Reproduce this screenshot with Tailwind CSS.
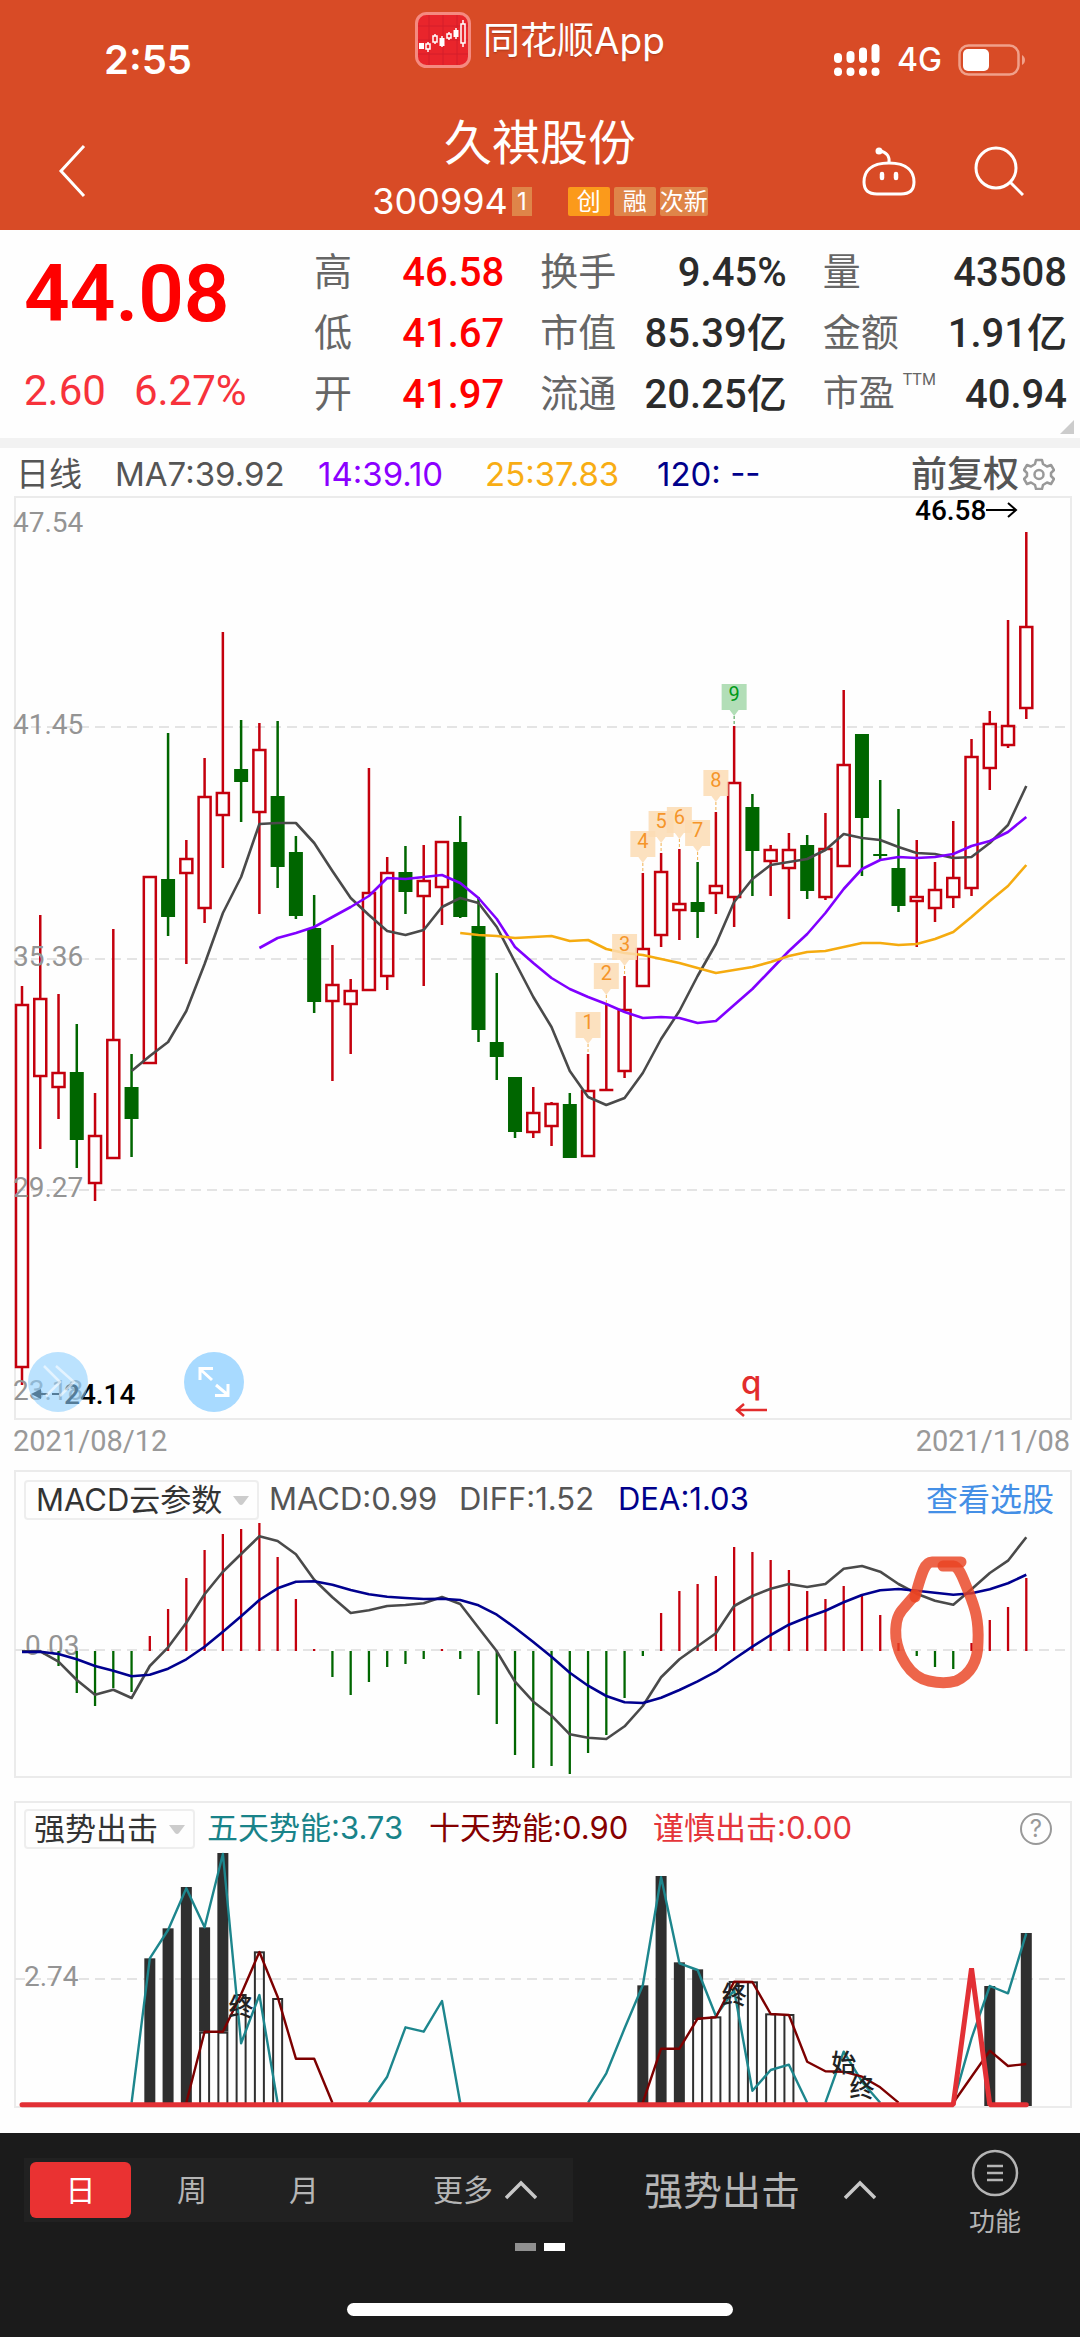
<!DOCTYPE html>
<html lang="zh-CN">
<head>
  <meta charset="UTF-8">
  <meta name="viewport" content="width=device-width, initial-scale=1.0">
  <title>久祺股份 300994</title>
  <script src="https://cdn.jsdelivr.net/npm/@tailwindcss/browser@4"></script>
</head>
<body class="flex min-h-screen flex-col bg-[#fefefe] font-['Inter','Noto_Sans_CJK_SC',sans-serif] text-[#333]">

  <!-- Encabezado -->
  <header class="bg-[#d84b26] text-white">
    <div class="grid h-[104px] grid-cols-3 items-center">
      <span class="pt-4 pl-[104px] text-[40px] leading-none font-semibold">2:55</span>
      <div class="flex items-center justify-center gap-3 self-start pt-3">
        <svg class="h-14 w-14" viewBox="0 0 56 56" fill="none">
          <rect x="1.5" y="1.5" width="53" height="53" rx="10" fill="#e9252c" stroke="#f58a80" stroke-width="3"/>
          <path d="M14 3v50M28 3v50M42 3v50M3 14h50M3 28h50M3 42h50" stroke="#d41f2a" stroke-width="1"/>
          <path d="M13 30v10M20 22v10M27 24v11M34 20v8M41 16v11M48 8v27" stroke="#fff" stroke-width="1.5"/>
          <path d="M4 31h5v6h-5zM24.500 26h5v8h-5zM38.500 18h5v7h-5z" fill="#fff"/>
          <path d="M11 32h4v5h-4zM18 24h4v6h-4zM32 22h4v4h-4zM46 12h4v19h-4z" fill="#e9252c" stroke="#fff" stroke-width="1.5"/>
        </svg>
        <span class="text-[37px] leading-none whitespace-nowrap text-shadow-sm">同花顺App</span>
      </div>
      <div class="flex items-center justify-end gap-4 pt-4 pr-[54px]">
        <svg class="h-8 w-12" viewBox="0 0 48 32" stroke="#fff" stroke-width="8" stroke-linecap="round">
          <path d="M5 13v2M17.500 11v4M30 7.500v7.500M42.500 4v11M5 27.500v.5M17.500 27.500v.5M30 27.500v.5M42.500 27.500v.5"/>
        </svg>
        <span class="text-[32px] leading-none font-medium">4G</span>
        <svg class="h-8 w-[68px]" viewBox="0 0 68 32" fill="none">
          <rect x="1.500" y="1.500" width="59" height="29" rx="9" stroke="#f0a08a" stroke-width="2.500"/>
          <rect x="5" y="5" width="26" height="22" rx="5" fill="#fff"/>
          <path d="M64 11c4 2 4 8 0 10z" fill="#f0a08a"/>
        </svg>
      </div>
    </div>
    <div class="grid h-[126px] grid-cols-[1fr_auto_1fr] items-center">
      <button aria-label="返回" class="ml-[58px] justify-self-start pt-2">
        <svg class="h-[54px] w-7" viewBox="0 0 28 54" fill="none" stroke="#fff" stroke-width="3"><path d="M26 2L3 27L26 52"/></svg>
      </button>
      <div class="flex flex-col items-center gap-4 pt-1 pb-2">
        <h1 class="text-[48px] leading-[56px]">久祺股份</h1>
        <div class="flex items-center gap-1 text-2xl leading-[29px]">
          <span class="text-[36px]">300994</span>
          <span class="mr-8 w-5 bg-[#df8549] text-center">1</span>
          <span class="w-[42px] rounded-xs bg-[#fb9a1b] text-center">创</span>
          <span class="w-[42px] rounded-xs bg-[#df8549] text-center">融</span>
          <span class="rounded-xs bg-[#df8549]">次新</span>
        </div>
      </div>
      <div class="flex items-center gap-[58px] justify-self-end pt-2 pr-14">
        <button aria-label="智能助手">
          <svg class="h-[50px] w-[54px]" viewBox="0 0 54 50" fill="none" stroke="#fff" stroke-width="3">
            <path d="M27 17C46 17 52 26 52 36C52 45 47 48 39 48H15C7 48 2 45 2 36C2 26 8 17 27 17z"/>
            <path d="M27 17C28 10 24 6 18 5"/>
            <circle cx="17" cy="5" r="3.500" fill="#fff" stroke="none"/>
            <path d="M20 28v4M34 28v4" stroke-width="4.500" stroke-linecap="round"/>
          </svg>
        </button>
        <button aria-label="搜索">
          <svg class="h-[50px] w-[50px]" viewBox="0 0 50 50" fill="none" stroke="#fff" stroke-width="3">
            <circle cx="22" cy="22" r="20"/><path d="M36 36L49 49"/>
          </svg>
        </button>
      </div>
    </div>
  </header>

  <!-- Cotización -->
  <section class="relative flex h-[208px] items-start pr-[13px] pl-6 font-['Roboto','Noto_Sans_CJK_SC',sans-serif]">
    <div class="w-[290px] pt-3">
      <div class="text-[80px] leading-[104px] font-semibold text-[#fe0000]">44.08</div>
      <div class="flex gap-[28px] pt-6 text-[42px] leading-[42px] text-[#f7323b]"><span>2.60</span><span>6.27%</span></div>
    </div>
    <dl class="grid flex-1 grid-cols-[190fr_246fr_244fr] gap-x-9 pt-3 text-[38px] leading-[61px] text-[#666] [&_dd]:text-[40px] [&_dd]:font-medium [&>div]:flex [&>div]:justify-between">
      <div><dt>高</dt><dd class="text-[#fe0000]">46.58</dd></div>
      <div><dt>换手</dt><dd class="text-[#2b2b2b]">9.45%</dd></div>
      <div><dt>量</dt><dd class="text-[#2b2b2b]">43508</dd></div>
      <div><dt>低</dt><dd class="text-[#fe0000]">41.67</dd></div>
      <div><dt>市值</dt><dd class="text-[#2b2b2b]">85.39亿</dd></div>
      <div><dt>金额</dt><dd class="text-[#2b2b2b]">1.91亿</dd></div>
      <div><dt>开</dt><dd class="text-[#fe0000]">41.97</dd></div>
      <div><dt>流通</dt><dd class="text-[#2b2b2b]">20.25亿</dd></div>
      <div><dt class="flex gap-2 text-[36px]">市盈<span class="pt-2 text-base leading-none">TTM</span></dt><dd class="text-[#2b2b2b]">40.94</dd></div>
    </dl>
    <svg class="absolute right-1.5 bottom-1 h-3.5 w-3.5" viewBox="0 0 14 14"><path d="M14 0V14H0z" fill="#ccc"/></svg>
  </section>
  <div class="h-2.5 bg-[#f2f2f2]"></div>

  <!-- Medias móviles -->
  <section class="flex h-12 items-center pt-1 pr-[25px] pl-4 text-[33px] leading-none text-[#555]">
    <span class="w-[99px]">日线</span>
    <span class="w-[203px]">MA7:39.92</span>
    <span class="w-[167px] text-[#8b00ff]">14:39.10</span>
    <span class="w-[172px] text-[#f8ad14]">25:37.83</span>
    <span class="text-[#00008b]">120: --</span>
    <button class="ml-auto flex items-center gap-1 text-[36px] font-medium">前复权
      <svg class="h-8 w-8" viewBox="0 0 32 32" fill="none" stroke="#999" stroke-width="2.500" stroke-linejoin="round">
        <path d="M13 2h6l1 4l4 2.500l4-1.500l3 5l-3 3v3l3 3l-3 5l-4-1.500l-4 2.500l-1 4h-6l-1-4l-4-2.500l-4 1.500l-3-5l3-3v-3l-3-3l3-5l4 1.500l4-2.500z"/>
        <circle cx="16" cy="16.500" r="4.500"/>
      </svg>
    </button>
  </section>

  <!-- Velas -->
  <section class="grid">
    <svg id="kline" class="col-start-1 row-start-1 w-full overflow-visible font-['Roboto',sans-serif]" viewBox="0 0 1080 924" fill="none"></svg>
    <div class="z-10 col-start-1 row-start-1 flex gap-24 self-end pb-2 pl-7">
      <button aria-label="快进" class="rounded-full bg-[#8ecffd]/60">
        <svg class="h-[60px] w-[60px]" viewBox="0 0 60 60" fill="none" stroke="#fff" stroke-opacity=".6" stroke-width="2.500"><path d="M16 14L32 30L18 44M28 14L46 30L32 44"/></svg>
      </button>
      <button aria-label="放大" class="rounded-full bg-[#a8daff]">
        <svg class="h-[60px] w-[60px]" viewBox="0 0 60 60" fill="none" stroke="#fff" stroke-width="3"><path d="M28 28L16 17M16 28V16.500H29M32 33L44 43M44 32V43.500H31"/></svg>
      </button>
    </div>
  </section>
  <div class="flex h-[50px] items-center justify-between pr-[10px] pb-1.5 pl-[13px] font-['Roboto',sans-serif] text-[29px] text-[#999]">
    <time>2021/08/12</time><time>2021/11/08</time>
  </div>

  <!-- MACD -->
  <section class="grid text-[30px] leading-none">
    <svg id="macd" class="col-start-1 row-start-1 w-full font-['Roboto',sans-serif]" viewBox="0 0 1080 308" fill="none"></svg>
    <div class="z-10 col-start-1 row-start-1 mt-2.5 flex h-10 items-center self-start pr-[26px] pl-6">
      <label class="relative mr-2.5">
        <select aria-label="指标" class="h-10 w-[235px] appearance-none rounded-sm border-2 border-[#eee] bg-[#fefefe] pl-2.5 text-[31px] leading-9 text-[#333]"><option>MACD云参数</option></select>
        <svg class="pointer-events-none absolute top-4 right-2.5 h-2.5 w-4" viewBox="0 0 16 10"><path d="M0 0H16L10 8Q8 10 6 8z" fill="#ccc"/></svg>
      </label>
      <span class="w-[190px] pb-1 text-[31px] text-[#555]">MACD:0.99</span>
      <span class="w-[159px] pb-1 text-[31px] text-[#555]">DIFF:1.52</span>
      <span class="pb-1 text-[31px] text-[#00008b]">DEA:1.03</span>
      <a href="#" class="ml-auto text-[32px] text-[#448fe6]">查看选股</a>
    </div>
  </section>

  <!-- 强势出击 -->
  <section class="mt-[23px] grid text-[31px] leading-none">
    <svg id="power" class="col-start-1 row-start-1 w-full font-['Roboto','Noto_Sans_CJK_SC',sans-serif]" viewBox="0 0 1080 308" fill="none"></svg>
    <div class="z-10 col-start-1 row-start-1 mt-2 flex h-10 items-center self-start pr-[28px] pl-6">
      <label class="relative mr-3">
        <select aria-label="副图指标" class="h-10 w-[171px] appearance-none rounded-sm border-2 border-[#eee] bg-[#fefefe] pl-2 leading-9 text-[#333]"><option>强势出击</option></select>
        <svg class="pointer-events-none absolute top-4 right-2.5 h-2.5 w-4" viewBox="0 0 16 10"><path d="M0 0H16L10 8Q8 10 6 8z" fill="#ccc"/></svg>
      </label>
      <span class="w-[222px] pb-1 text-[#198389]">五天势能:3.73</span>
      <span class="w-[224px] pb-1 text-[#850000]">十天势能:0.90</span>
      <span class="pb-1 text-[#e5353a]">谨慎出击:0.00</span>
      <button aria-label="帮助" class="ml-auto h-8 w-8 rounded-full border-2 border-[#999] text-2xl leading-none text-[#999]">?</button>
    </div>
  </section>

  <!-- Barra inferior -->
  <nav class="mt-6 flex flex-1 flex-col bg-[#1b1b1b] text-[#b5b5b5]">
    <div class="flex items-start pl-6">
      <div class="mt-[25px] flex h-16 w-[549px] items-center bg-[#212121] pl-1.5 text-[30px] leading-none">
        <button class="h-14 w-[101px] rounded-md bg-[#ea3232] text-white">日</button>
        <button class="h-14 w-[122px]">周</button>
        <button class="h-14 w-[102px]">月</button>
        <button class="ml-auto flex h-14 items-center gap-3 pr-9">更多
          <svg class="h-5 w-8" viewBox="0 0 32 20" fill="none" stroke="#c8c8c8" stroke-width="3.500"><path d="M1 18L16 3L31 18"/></svg>
        </button>
      </div>
      <button class="mt-[25px] ml-[71px] flex h-16 items-center gap-11 text-[39px] leading-none">强势出击
        <svg class="h-5 w-8" viewBox="0 0 32 20" fill="none" stroke="#c8c8c8" stroke-width="3.500"><path d="M1 18L16 3L31 18"/></svg>
      </button>
      <button class="mr-[59px] ml-auto flex flex-col items-center gap-2.5 pt-4 text-[26px] leading-[30px]">
        <svg class="h-12 w-12" viewBox="0 0 48 48" fill="none" stroke="#b5b5b5" stroke-width="2.500"><circle cx="24" cy="24" r="22"/><path d="M16 17h16M16 24h16M16 31h16"/></svg>
        功能
      </button>
    </div>
    <div class="flex justify-center gap-2 pt-1.5">
      <i class="h-2 w-[21px] bg-[#909090]"></i><i class="h-2 w-[21px] bg-white"></i>
    </div>
    <div class="mx-auto mt-auto mb-[21px] h-[13px] w-[386px] rounded-full bg-white"></div>
  </nav>

  <script>
    const RED = '#c4000d', GREEN = '#006600', DARK = '#2f2f2f';
    const x = i => 22 + i * 18.26;
    const line = (pts, start, fy, color, w = 2.6) =>
      `<polyline points="${pts.map((v, i) => x(i + start).toFixed(1) + ',' + fy(v).toFixed(1)).join(' ')}" stroke="${color}" stroke-width="${w}" stroke-linejoin="round"/>`;
    const dash = y => `<path d="M15 ${y}H1071" stroke="#e4e4e4" stroke-width="2" stroke-dasharray="10 6"/>`;
    const label = (y, t, lx = 13) => `<text x="${lx}" y="${y}" font-size="28" fill="#949494">${t}</text>`;
    const frame = (top, bottom) => `<path d="M15 ${top}H1071V${bottom}H15z" stroke="#ebebeb" stroke-width="2"/>`;

    // Cada vela: [alcista, máximo, techo, suelo, mínimo]
    const candles = [
      [1,986,1005,1367,1385],[1,915,999,1076,1149],[1,994,1073,1087,1119],[0,1024,1072,1140,1168],[1,1093,1136,1183,1201],
      [1,929,1040,1158,1158],[0,1054,1087,1119,1157],[1,877,877,1063,1063],[0,733,879,917,936],[1,840,859,873,964],
      [1,758,797,908,923],[1,632,793,815,868],[0,720,769,782,822],[1,723,750,812,914],[0,721,796,867,888],
      [0,836,852,916,919],[0,895,928,1002,1013],[1,945,985,1001,1081],[1,979,991,1004,1054],[1,768,893,990,990],
      [1,857,873,976,990],[0,846,872,892,914],[1,845,881,896,986],[1,842,842,887,925],[0,816,842,917,918],
      [0,897,926,1030,1042],[0,973,1042,1057,1080],[0,1077,1077,1132,1138],[1,1087,1113,1132,1138],[1,1102,1104,1126,1146],
      [0,1093,1104,1158,1158],[1,1054,1091,1156,1156],[1,1005,1090,1090,1090],[1,976,1010,1071,1078],[1,873,949,986,986],
      [1,853,872,935,947],[1,849,904,910,940],[0,862,902,912,938],[1,812,886,893,914],[1,726,783,897,927],
      [0,794,807,851,896],[1,845,850,861,896],[1,833,850,868,919],[0,835,845,891,899],[1,813,849,897,900],
      [1,690,765,866,866],[0,734,734,818,876],[0,780,854,856,860],[0,809,868,906,912],[1,840,897,901,947],
      [1,862,890,908,922],[1,821,878,897,908],[1,739,757,888,896],[1,711,724,768,790],[1,620,726,745,748],
      [1,532,627,708,719]
    ];
    const ma7 = [1071,1056,1042,1011,964,913,877,824,823,823,843,871,898,915,931,935,930,907,898,903,927,962,997,1027,1071,1097,1105,1098,1073,1039,1011,976,944,902,879,865,862,859,850,834,838,840,847,853,854,858,857,843,825,786];
    const ma14 = [948,938,933,927,917,907,896,878,879,877,875,883,898,919,947,963,978,989,997,1004,1012,1018,1017,1018,1023,1021,1005,989,970,951,934,913,889,869,860,857,858,857,854,846,841,832,817];
    const ma25 = [933,935,936,938,937,936,941,940,949,953,955,959,963,968,973,970,967,962,956,952,951,947,943,943,945,944,939,932,917,901,886,865];

    const ky = v => v - 496;
    let k = frame(1, 923) + dash(231) + dash(463) + dash(694);
    candles.forEach(([up, hi, top, bot, lo], i) => {
      const c = up ? RED : GREEN, cx = x(i);
      k += `<path d="M${cx} ${ky(hi)}V${ky(top)}M${cx} ${ky(bot)}V${ky(lo)}" stroke="${c}" stroke-width="2.5"/>`;
      k += up
        ? `<rect x="${cx - 6}" y="${ky(top)}" width="12" height="${bot - top}" stroke="${c}" stroke-width="2.5"/>`
        : `<rect x="${cx - 7}" y="${ky(top)}" width="14" height="${bot - top}" fill="${c}"/>`;
    });
    // Vela sin cuerpo
    k += `<path d="M${x(32) - 7} ${ky(1090)}h14" stroke="${RED}" stroke-width="2.5"/>`;
    k += line(ma7, 6, ky, '#4a4a4a') + line(ma14, 13, ky, '#8000ff') + line(ma25, 24, ky, '#f5ab10');
    // Marcadores numerados 1-9
    for (let n = 1; n <= 9; n++) {
      const i = n + 30, cx = x(i), t = ky(candles[i][1]) - 42, green = n === 9;
      k += `<g><path d="M${cx - 12.5} ${t}h25v26h-8l-4.500 6l-4.500-6h-8z" fill="${green ? '#a5d8aa' : '#fcdcb4'}" fill-opacity=".85"/>
        <path d="M${cx} ${t + 32}v10" stroke="${green ? '#3d9a45' : '#f0b050'}" stroke-dasharray="3 2"/>
        <text x="${cx}" y="${t + 17}" text-anchor="middle" font-size="20" fill="${green ? '#009a18' : '#f5952a'}">${n}</text></g>`;
    }
    k += label(36, '47.54') + label(238, '41.45') + label(470, '35.36') + label(701, '29.27') + label(904, '23.18');
    k += `<text x="915" y="24" font-size="28" font-weight="500" fill="#000">46.58</text><path d="M986 14h30M1008 7l8 7l-8 7" stroke="#000" stroke-width="2"/>
      <text x="64" y="908" font-size="28" font-weight="500" fill="#000">24.14</text><path d="M40 898h8M52 898h7" stroke="#000" stroke-width="2"/><path d="M31 898l10-5v10z" fill="#000"/>
      <text x="741" y="898" font-size="33" font-weight="500" class="font-['Inter',sans-serif]" fill="#e22c2c">q</text><path d="M767 914H737M744 908l-7 6l7 6" stroke="#e22c2c" stroke-width="2.5"/>`;
    document.getElementById('kline').innerHTML = k;

    // MACD
    const hist = [0,0,-15,-42,-55,-37,-41,15,42,73,101,117,122,128,94,52,2,-26,-44,-31,-16,-13,-8,2,-8,-44,-73,-104,-117,-115,-123,-102,-84,-47,-5,38,60,67,75,104,99,91,81,60,52,65,57,36,8,-5,-16,-18,8,31,44,73];
    const diff = [604,604,635,690,734,719,744,648,592,518,433,365,312,259,273,313,389,442,489,481,468,465,460,441,462,533,604,695,755,797,853,863,867,829,768,682,628,589,550,468,438,416,402,411,402,356,348,365,402,431,452,464,418,369,332,262];
    const dea = [606,605,612,628,648,662,679,674,656,628,590,545,499,450,415,395,394,404,420,433,440,444,447,446,450,466,494,533,576,620,668,707,738,757,759,743,720,694,665,627,590,555,524,502,482,457,435,421,417,422,428,434,430,418,400,374];
    const my = v => (v - 60) / 3;
    let m = frame(1, 307) + dash(180) + label(185, '0.03', 25);
    hist.forEach((h, i) => {
      if (h) m += `<path d="M${x(i)} 181v${-h}" stroke="${h > 0 ? RED : GREEN}" stroke-width="2.3"/>`;
    });
    m += line(diff, 0, my, '#4a4a4a') + line(dea, 0, my, '#00008f');
    // Trazo a mano alrededor del cruce
    m += `<g stroke="#e94322" stroke-opacity=".82" stroke-width="11" stroke-linecap="round" stroke-linejoin="round">
      <path d="M961 92H932C925 92 922 101 915 127"/>
      <path d="M915 125L902 140C896 147 895 156 896 168C898 184 909 207 929 211C938 213 949 213 956 211C971 204 978 190 978 172C979 150 975 138 969 123C963 109 960 97 953 96H943"/></g>`;
    document.getElementById('macd').innerHTML = m;

    // Barras [índice, techo, base, hueca]
    const bars = [[7,535,974,0],[8,445,974,0],[9,321,974,0],[10,442,755,0],[10,758,974,1],[11,219,755,0],[11,758,974,1],[12,645,974,1],[13,517,974,1],[14,657,974,1],
      [34,616,974,0],[35,288,974,0],[36,547,974,0],[37,568,714,0],[37,717,974,1],[38,712,974,1],[39,606,974,1],[40,607,974,1],[41,703,974,1],[42,705,974,1],[53,618,978,0],[55,459,978,0]];
    const py = v => (v - 63) / 3;
    let p = frame(1, 306) + dash(178) + label(185, '2.74', 24);
    bars.forEach(([i, t, b, hollow]) => {
      p += hollow
        ? `<rect x="${x(i) - 4.5}" y="${py(t)}" width="9" height="${(b - t) / 3}" stroke="${DARK}" stroke-width="2"/>`
        : `<rect x="${x(i) - 5.5}" y="${py(t)}" width="11" height="${(b - t) / 3}" fill="${DARK}"/>`;
    });
    [[6,[968,535,450,325,442,222,790,645,968]],[19,[968,890,742,755,663,968]],[31,[968,880,745,616,292,550,570,708,630,932,870,854,968]],[44,[968,815,905,968]],[51,[968,775,618,640,460]]]
      .forEach(([s, pts]) => { p += line(pts, s, py, '#1d868d', 2.4); });
    [[9,[968,755,755,643,516,650,836,836,968]],[34,[968,806,806,716,712,605,606,702,705,845,874,875,890,922,968]],[51,[968,890,812,858,852]]]
      .forEach(([s, pts]) => { p += line(pts, s, py, '#7d0000', 2.4); });
    [[12,'终',682],[39,'终',645],[45,'始',850],[46,'终',925]].forEach(([i, t, y]) => {
      p += `<text x="${x(i)}" y="${py(y) + 9}" text-anchor="middle" font-size="25" font-weight="500" fill="#222">${t}</text>`;
    });
    p += `<path d="M${x(0)} ${py(974)}H${x(51)}L${x(52)} ${py(565)}L${x(53)} ${py(974)}H${x(55)}" stroke="#e23035" stroke-width="5" stroke-linejoin="bevel" stroke-linecap="round"/>`;
    document.getElementById('power').innerHTML = p;
  </script>
</body>
</html>
